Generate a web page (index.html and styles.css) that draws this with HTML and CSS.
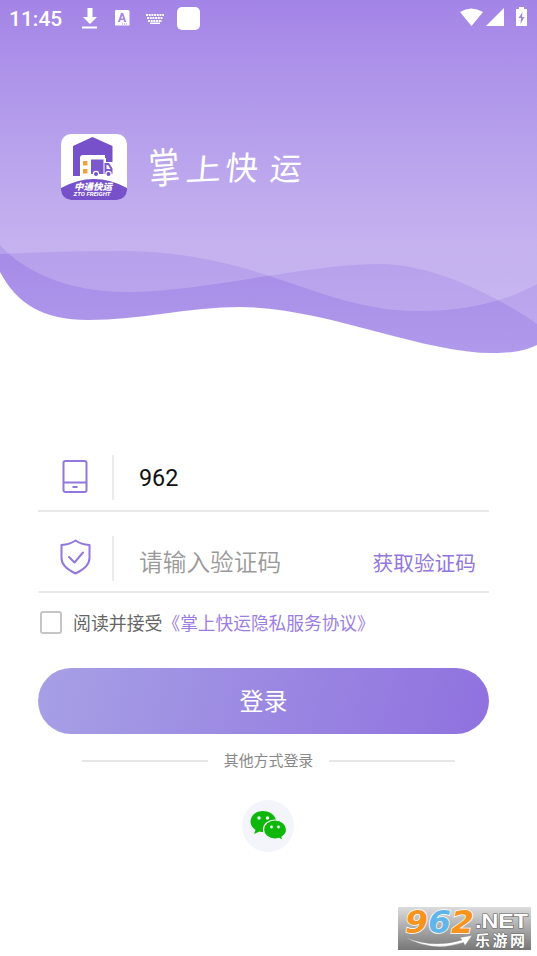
FILE: index.html
```html
<!DOCTYPE html>
<html lang="zh-CN">
<head>
<meta charset="utf-8">
<title>掌上快运</title>
<link rel="stylesheet" href="styles.css">
</head>
<body>
<main class="screen">
  <header class="hero">
    <svg class="waves" viewBox="0 0 537 360" aria-hidden="true">
      <defs>
        <linearGradient id="base" x1="0" y1="0" x2="0" y2="1"><stop offset="0" stop-color="#a384e7"/><stop offset=".75" stop-color="#a88de8"/><stop offset="1" stop-color="#b09aeb"/></linearGradient>
        <linearGradient id="veil" gradientUnits="userSpaceOnUse" x1="0" y1="0" x2="0" y2="240"><stop offset="0" stop-color="#fff" stop-opacity="0"/><stop offset="1" stop-color="#fff" stop-opacity=".18"/></linearGradient>
      </defs>
      <path fill="url(#base)" d="M0 0H537V345C525 351 512 353 493 353C420 353 325 307 240 307C190 307 140 320 88 320C43 320 17 304 0 272Z"/>
      <path fill="url(#veil)" d="M0 0H537V324C500 298 435 264 380 264C305 264 205 292 128 292C77 292 29 277 0 245Z"/>
      <path fill="url(#veil)" d="M0 0H537V284C500 304 460 311 418 311C320 311 260 251 120 251Q55 251 0 254Z"/>
    </svg>
    <div class="status">
      <span class="time">11:45</span>
      <svg class="left-icons" width="120" height="28" viewBox="0 0 120 28" fill="#fff">
        <path d="M8.500 1h5v9h4.500l-7 7L4 10h4.500zM3 19.500h15v2H3z"/>
        <path fill-rule="evenodd" d="M37 3h12a1.500 1.500 0 0 1 1.500 1.500v14H36v-14A1.500 1.500 0 0 1 37 3zM42 6l-3 9h2l.6-2h3l.6 2h2l-3-9zm1.200 2.500l.9 3h-1.800zM43 16.500h1v1h-1zm2 0h1v1h-1zm2 0h1v1h-1z"/>
        <path d="M67 8h18M68 11h16M69 14h14" fill="none" stroke="#fff" stroke-width="2" stroke-dasharray="2 .7"/>
        <path d="M71 15.500h10V17H71z"/>
        <rect x="98" y="0" width="23" height="23" rx="5"/>
      </svg>
      <svg class="right-icons" width="70" height="22" viewBox="0 0 70 22" fill="#fff">
        <path d="M0 5Q11-2 23 5L11.500 19zM44 1V19H26zM59 0h5v2h3v17H56V2h3z"/>
        <path fill="#a384e7" d="M62.500 5l-4 6h2.500l-.5 6 4-7h-2.500z"/>
      </svg>
    </div>
    <div class="brand">
      <svg class="logo" width="66" height="66" viewBox="0 0 66 66">
        <defs><clipPath id="tile"><rect width="66" height="66" rx="10"/></clipPath></defs>
        <g clip-path="url(#tile)">
          <path fill="#fff" d="M0 0h66v66H0z"/>
          <path fill="#7651ca" d="M12 12L31.500 3l20 9v16H44V21H22q-3 0-3 3v18h-7zM0 54Q33 36 66 54V66H0z"/>
          <path fill="#f4a13b" d="M22 27h4.500v4.500H22zm0 8h4.500v4.500H22z"/>
          <path fill="#fff" d="M28.500 24H45v4h5l3 6v9H28.500z"/>
          <path fill="#7c59cb" fill-rule="evenodd" d="M30 25.500h12.500V40H30zM43.500 29H48l3.500 5.500V40h-8zM45.500 31v4h4L47 31z"/>
          <g fill="#7651ca" stroke="#fff" stroke-width="1.200"><circle cx="35" cy="40" r="2.600"/><circle cx="47.500" cy="40" r="2.600"/></g>
          <text class="logo-name" x="32" y="56" text-anchor="middle" textLength="38" lengthAdjust="spacingAndGlyphs">中通快运</text>
          <text class="logo-sub" x="31" y="62" text-anchor="middle" textLength="37" lengthAdjust="spacingAndGlyphs">ZTO FREIGHT</text>
        </g>
      </svg>
      <h1 class="title"><span class="c1">掌</span><span class="c2">上</span><span class="c3">快</span><span class="c4">运</span></h1>
    </div>
  </header>
  <form class="form">
    <div class="field">
      <svg class="field-icon" width="36" height="36" viewBox="0 0 36 36" fill="none" stroke="#9277dc" stroke-width="2"><rect x="6.500" y="2" width="23" height="31" rx="2"/><path d="M6.500 23.500h23M15.500 28h5"/></svg>
      <i class="rule"></i>
      <span class="value">962</span>
    </div>
    <div class="field second">
      <svg class="field-icon" width="36" height="36" viewBox="0 0 36 36" fill="none" stroke="#9277dc" stroke-width="2"><path stroke-linejoin="round" d="M18.500 1.500Q24 5.500 32.500 6V19Q32.500 28 18.500 34.500Q4.500 28 4.500 19V6Q13 5.500 18.500 1.500z"/><path stroke-linecap="round" stroke-linejoin="round" d="M12 18l5.500 5.500 8.500-10"/></svg>
      <i class="rule"></i>
      <span class="hint">请输入验证码</span>
      <span class="code">获取验证码</span>
    </div>
    <div class="agree"><i class="box"></i><span>阅读并接受<a>《掌上快运隐私服务协议》</a></span></div>
    <button class="login" type="button">登录</button>
    <div class="other"><i></i><span>其他方式登录</span><i></i></div>
    <div class="wechat">
      <svg width="52" height="52" viewBox="0 0 52 52"><g fill="#0fb70b"><path d="M21 11c-7 0-12.500 4.500-12.500 10.500 0 3.500 2 6.500 5 8.500l-1.500 4 5.500-2.600q2 .6 4 .6c7 0 12.500-4.500 12.500-10.500S28 11 21 11z"/><path stroke="#f4f5fb" stroke-width="1.200" d="M33 20c-6.500 0-11.500 4-11.500 9.500S26.500 39 33 39q2 0 4-.6l4 2.100-1-3.500c3-1.800 4.500-4.500 4.500-7.500C44.500 24 39.500 20 33 20z"/></g><g fill="#f4f5fb"><circle cx="17" cy="18" r="1.700"/><circle cx="25.500" cy="18" r="1.700"/><circle cx="29.500" cy="27" r="1.400"/><circle cx="36.500" cy="27" r="1.400"/></g></svg>
    </div>
  </form>
  <footer class="mark">
    <svg width="133" height="43" viewBox="0 0 133 43">
      <defs><linearGradient id="g" x1="0" y1="0" x2="0" y2="1"><stop offset="0" stop-color="#dcdcdc"/><stop offset="1" stop-color="#777"/></linearGradient></defs>
      <path fill="url(#g)" d="M0 0h133v43H0z"/>
      <path fill="#fff" stroke="#888" stroke-width=".4" d="M7 30Q34 42 64 33l-2-2.500 12-2-7 10-1.500-3Q34 46 7 30z"/>
      <g class="mark-num"><text x="7" y="26" fill="#f7941d" textLength="23" lengthAdjust="spacingAndGlyphs">9</text><text x="30" y="26" fill="#62b5e8" textLength="23" lengthAdjust="spacingAndGlyphs">6</text><text x="53" y="26" fill="#f7941d" textLength="23" lengthAdjust="spacingAndGlyphs">2</text></g>
      <text class="mark-net" x="77" y="21" textLength="53" lengthAdjust="spacingAndGlyphs">.NET</text>
      <text class="mark-cn" x="77" y="39" textLength="50">乐游网</text>
    </svg>
  </footer>
</main>
</body>
</html>
```
FILE: styles.css
```css
* { box-sizing: border-box; }
body { margin: 0; background: #fff; font-family: Roboto, "Noto Sans CJK SC", sans-serif; }
.screen { height: 956px; display: flex; flex-direction: column; overflow: hidden; }
.hero { height: 360px; display: grid; flex: none; }
.waves { grid-area: 1 / 1; width: 537px; height: 360px; }
.status { grid-area: 1 / 1; display: flex; height: 40px; padding: 7px 10px 0 9px; color: #fff; z-index: 1; }
.time { font-size: 21px; line-height: 24px; width: 70px; font-weight: 500; }
.left-icons { overflow: visible; }
.right-icons { margin-left: auto; margin-right: -3px; }
.brand { grid-area: 1 / 1; display: flex; align-items: flex-start; padding: 134px 0 0 61px; z-index: 1; }
.logo { flex: none; }
.logo-name { font: italic 900 9px "Noto Sans CJK SC", sans-serif; fill: #fff; }
.logo-sub { font: italic 700 5px Roboto, sans-serif; fill: #fff; }
.title { display: flex; gap: 6px; margin: 11px 0 0 20px; color: #fff; font: 400 34px/44px "Noto Sans CJK SC", sans-serif; }
.title span { display: block; width: 34px; }
.c1 { transform: translateY(-1px) rotate(-4deg) scale(.9, 1.22); }
.c2 { transform: translateY(1px) rotate(-3deg) skewX(-8deg) scale(1.05, .88); }
.c3 { transform: translateX(-2px) skewX(-6deg) scale(.96); }
.c4 { transform: translateX(2px) skewX(-6deg) scale(.92); }
.form { padding: 91px 48px 0 38px; }
.field { display: flex; align-items: center; height: 61px; border-bottom: 2px solid #e9e9ec; padding-bottom: 6px; }
.field.second { height: 81px; padding-top: 20px; padding-bottom: 6px; }
.field-icon { margin-left: 19px; margin-top: -1px; flex: none; }
.second .field-icon { margin-top: -3px; }
.rule { width: 2px; height: 45px; background: #ebebee; margin-left: 19px; }
.value { font-size: 23.3px; color: #111; margin: 0 0 0 25px; }
.hint { font-size: 23.7px; font-weight: 350; color: #999; margin: 5px 0 0 25px; }
.code { font-size: 20.7px; color: #9277dc; margin: 6px 13px 0 auto; }
.agree { display: flex; align-items: center; height: 59px; font-size: 17.900px; color: #666; white-space: nowrap; }
.agree span { margin-top: -2px; }
.agree a { color: #9b7ee4; font-size: 17.700px; }
.box { width: 22px; height: 23px; border: 2px solid #c5c5c5; border-radius: 3px; margin: 0 11px 0 2px; }
.login { display: block; width: 451px; height: 66px; margin-top: 16px; padding: 0 0 3px; border: 0; border-radius: 33px; color: #fff; background: linear-gradient(105deg, #a6a0e5, #9071df); font: 24px Roboto, "Noto Sans CJK SC", sans-serif; }
.other { display: flex; align-items: center; justify-content: center; gap: 16px; width: 461px; height: 54px; font-size: 14.900px; color: #888; }
.other span { margin-top: -4px; }
.other i { width: 126px; height: 2px; background: #e7e7e9; }
.wechat { width: 52px; height: 52px; margin: 12px 0 0 204px; border-radius: 50%; background: #f4f5fb; }
.mark { margin: auto 6px 6px auto; height: 43px; }
.mark svg { overflow: visible; display: block; }
.mark-num { font: italic 700 32px "DejaVu Sans", sans-serif; stroke: #fff; stroke-width: 1.500px; paint-order: stroke; }
.mark-net { font: 700 20px "Liberation Sans", sans-serif; fill: #fff; stroke: #666; stroke-width: 1.200px; paint-order: stroke; }
.mark-cn { font: 700 15px "Noto Sans CJK SC", sans-serif; fill: #fff; stroke: #666; stroke-width: 1px; paint-order: stroke; }
```
